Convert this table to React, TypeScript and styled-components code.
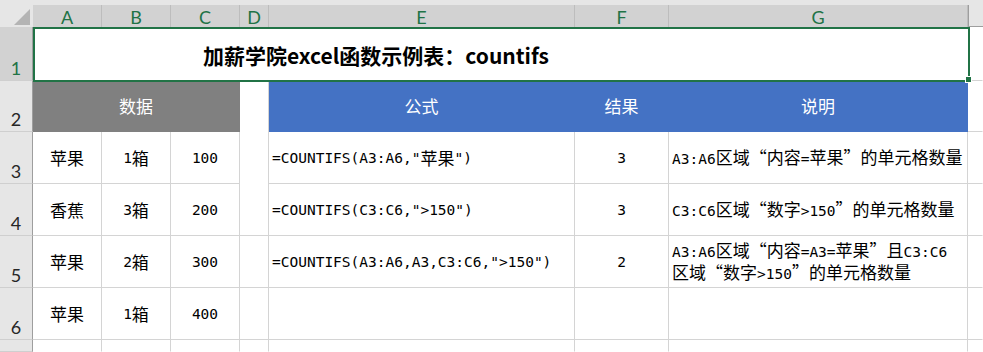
import React from "react";
import styled, { createGlobalStyle } from "styled-components";

const GlobalStyle = createGlobalStyle`
  html, body {
    margin: 0;
    padding: 0;
    background: #fff;
    overflow: hidden;
  }
  body {
    width: 983px;
    height: 352px;
  }
`;

// sheet rows 3..7, sheet row n sits on grid row n + 2
const dataRows = [
    { a: "苹果", b: "1箱", c: "100", e: '=COUNTIFS(A3:A6,"苹果")', f: "3", g: ["A3:A6区域“内容=苹果”的单元格数量"] },
    { a: "香蕉", b: "3箱", c: "200", e: '=COUNTIFS(C3:C6,">150")', f: "3", g: ["C3:C6区域“数字>150”的单元格数量"] },
    {
        a: "苹果", b: "2箱", c: "300", e: '=COUNTIFS(A3:A6,A3,C3:C6,">150")', f: "2",
        g: ["A3:A6区域“内容=A3=苹果”且C3:C6", "区域“数字>150”的单元格数量"],
    },
    { a: "苹果", b: "1箱", c: "400", e: "", f: "", g: [] },
    { a: "", b: "", c: "", e: "", f: "", g: [] },
];

const columns = ["A", "B", "C", "D", "E", "F", "G", ""];

const HAN = /([\u2018-\u201f\u3000-\u303f\u4e00-\u9fff\uff00-\uffef]+)/;

function Mixed({ text }: { text: string }) {
    return (
        <>
            {text.split(HAN).map((part, i) => (i % 2 ? <Han key={i}>{part}</Han> : part))}
        </>
    );
}

export default function App() {
    return (
        <>
            <GlobalStyle />
            <Sheet>
                <Corner>
                    <svg width="16" height="16" viewBox="0 0 16 16">
                        <polygon points="16,0 16,16 0,16" fill="#b4b4b4" />
                    </svg>
                </Corner>
                <TopStrip />
                {columns.map((name, i) => (
                    <ColHead key={i} $c={i + 2} $sel={name !== ""}>
                        {name}
                    </ColHead>
                ))}
                {[1, 2, 3, 4, 5, 6, 7].map((n) => (
                    <RowHead key={n} $r={n + 2} $sel={n === 1}>
                        {n < 7 ? n : null}
                    </RowHead>
                ))}

                <TitleCell>
                    加薪学院excel函数示例表：countifs
                    <FillHandle />
                </TitleCell>
                <Cell $c={9} $r={3} $openRight />

                <Cell $c={2} $r={4} $cs={3} $fill="#808080">
                    <Han>数据</Han>
                </Cell>
                <Cell $c={5} $r={4} $rs={3} />
                <Cell $c={6} $r={4} $fill="#4472c4">
                    <Han>公式</Han>
                </Cell>
                <Cell $c={7} $r={4} $fill="#4472c4">
                    <Han>结果</Han>
                </Cell>
                <Cell $c={8} $r={4} $fill="#4472c4">
                    <Han>说明</Han>
                </Cell>
                <Cell $c={9} $r={4} $openRight />

                {dataRows.map((row, i) => {
                    const r = i + 5;
                    const last = r === 9;
                    return (
                        <React.Fragment key={r}>
                            <Cell $c={2} $r={r} $openBottom={last}><Mixed text={row.a} /></Cell>
                            <Cell $c={3} $r={r} $openBottom={last}><Mixed text={row.b} /></Cell>
                            <Cell $c={4} $r={r} $openBottom={last}><Mixed text={row.c} /></Cell>
                            {r >= 7 && <Cell $c={5} $r={r} $openBottom={last} />}
                            <Cell $c={6} $r={r} $left $openBottom={last}><Mixed text={row.e} /></Cell>
                            <Cell $c={7} $r={r} $openBottom={last}><Mixed text={row.f} /></Cell>
                            <Cell $c={8} $r={r} $left $openBottom={last}>
                                <Lines>
                                    {row.g.map((line, j) => (
                                        <span key={j}>
                                            <Mixed text={line} />
                                        </span>
                                    ))}
                                </Lines>
                            </Cell>
                            <Cell $c={9} $r={r} $openRight $openBottom={last} />
                        </React.Fragment>
                    );
                })}
            </Sheet>
        </>
    );
}

const Sheet = styled.div`
    display: grid;
    grid-template-columns: 33px 69px 69px 69px 29px 306px 94px 299px 15px;
    grid-template-rows: 5px 22px 54px 51px 52px 52px 52px 52px 12px;
    width: 983px;
    height: 352px;
    background: #fff;
`;

const Corner = styled.div`
    grid-column: 1;
    grid-row: 1 / 3;
    display: flex;
    justify-content: flex-end;
    align-items: flex-end;
    padding: 0 3px 2px 0;
    background: #e6e6e6;
`;

const TopStrip = styled.div`
    grid-column: 2 / -1;
    grid-row: 1;
    background: #e6e6e6;
`;

const HeadText = styled.div`
    display: flex;
    justify-content: center;
    align-items: flex-end;
    box-sizing: border-box;
    overflow: hidden;
    font-family: Lato, "Liberation Sans", sans-serif;
    font-size: 18px;
    line-height: 1;
`;

const ColHead = styled(HeadText)<{ $c: number; $sel: boolean }>`
    grid-column: ${(p) => p.$c};
    grid-row: 2;
    padding-bottom: 1px;
    color: #217346;
    background: ${(p) => (p.$sel ? "#d2d2d2" : "#e6e6e6")};
    border-right: ${(p) => (p.$sel ? "1px solid #bdbdbd" : "none")};
    border-left: ${(p) => (p.$sel ? "none" : "1px solid #9e9e9e")};
    border-bottom: ${(p) => (p.$sel ? "none" : "1px solid #9e9e9e")};
`;

const RowHead = styled(HeadText)<{ $r: number; $sel: boolean }>`
    grid-column: 1;
    grid-row: ${(p) => p.$r};
    padding-bottom: 3px;
    color: ${(p) => (p.$sel ? "#217346" : "#262626")};
    background: ${(p) => (p.$sel ? "#d2d2d2" : "#e6e6e6")};
    border-right: 1px solid #9e9e9e;
    border-bottom: 1px solid #cfcfcf;
`;

const TitleCell = styled.div`
    grid-column: 2 / 9;
    grid-row: 3;
    position: relative;
    z-index: 1;
    margin: 0 -2px -1px 0;
    display: flex;
    align-items: center;
    padding-left: 168px;
    box-sizing: border-box;
    border: 2px solid #217346;
    background: #fff;
    color: #000;
    font-family: "Noto Sans CJK SC", sans-serif;
    font-weight: 700;
    font-size: 21px;
`;

const FillHandle = styled.span`
    position: absolute;
    right: -4px;
    bottom: -3px;
    width: 5px;
    height: 5px;
    background: #217346;
    border: 1px solid #fff;
`;

const Cell = styled.div<{
    $c: number;
    $r: number;
    $cs?: number;
    $rs?: number;
    $left?: boolean;
    $fill?: string;
    $openRight?: boolean;
    $openBottom?: boolean;
}>`
    grid-column: ${(p) => p.$c} / span ${(p) => p.$cs ?? 1};
    grid-row: ${(p) => p.$r} / span ${(p) => p.$rs ?? 1};
    display: flex;
    align-items: center;
    justify-content: ${(p) => (p.$left ? "flex-start" : "center")};
    min-width: 0;
    padding: 0 3px;
    box-sizing: border-box;
    background: ${(p) => p.$fill ?? "#fff"};
    color: ${(p) => (p.$fill ? "#fff" : "#000")};
    border-right: 1px solid ${(p) => (p.$fill || p.$openRight ? "transparent" : "#d4d4d4")};
    border-bottom: 1px solid ${(p) => (p.$fill || p.$openBottom ? "transparent" : "#d4d4d4")};
    font-family: "DejaVu Sans Mono", "Noto Sans CJK SC", monospace;
    font-size: 14.5px;
    line-height: 20px;
    white-space: nowrap;
`;

const Han = styled.span`
    font-family: "Noto Sans CJK SC", sans-serif;
    font-size: 17px;
    font-feature-settings: "fwid";
`;

const Lines = styled.div`
    display: flex;
    flex-direction: column;
`;
